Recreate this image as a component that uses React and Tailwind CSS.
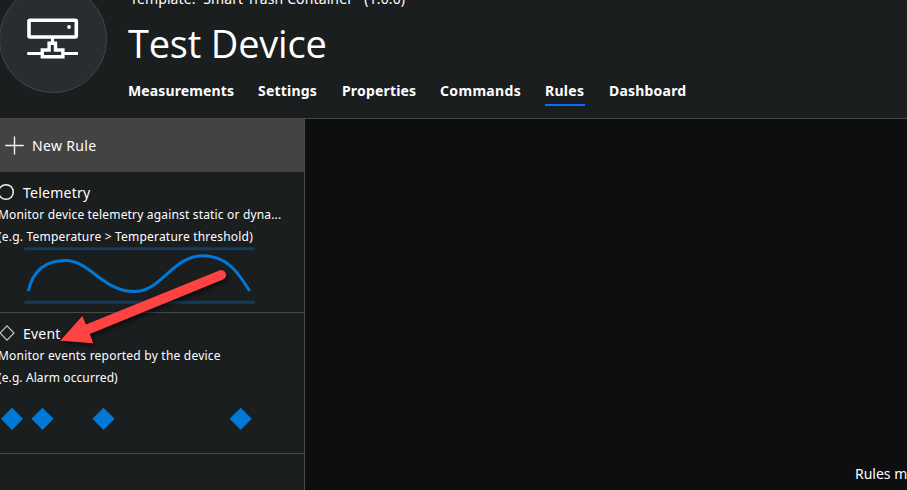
const TABS = [
  { label: 'Measurements', box: 'w-[106px]', tracking: 'tracking-[0.13px]' },
  { label: 'Settings', box: 'w-[60px]', tracking: 'tracking-[0.2px]' },
  { label: 'Properties', box: 'w-[74px]', tracking: 'tracking-[0.17px]' },
  { label: 'Commands', box: 'w-[81px]', tracking: 'tracking-[0.33px]' },
  { label: 'Rules', box: 'w-[40px]', tracking: 'tracking-[0.27px]', active: true },
  { label: 'Dashboard', box: 'w-[78px]', tracking: 'tracking-[0.2px]' },
];

function DeviceAvatar() {
  return (
    <svg className="-ml-px -mt-[15px] h-[108px] w-[108px] shrink-0" viewBox="-1 -15 108 108" fill="none">
      <circle cx="53" cy="39" r="53.6" fill="#2a2d30" stroke="#444648" strokeWidth="1" />
      <g stroke="#fff" strokeWidth="3.6">
        <rect x="29" y="20.2" width="47.3" height="16.8" rx="1" />
        <path d="M52.5 38v5M27.3 53.5H42M63 53.5h15" strokeWidth="3.2" />
        <path d="M42.3 56.8V50h6.8v-6.8h6.4V50h7.4v6.8z" strokeWidth="3.4" />
      </g>
      <circle cx="69" cy="27" r="1.9" fill="#fff" />
    </svg>
  );
}

function TelemetryChart() {
  return (
    <svg className="mt-[-2px] h-[60px] w-[304px]" viewBox="0 246 304 60" fill="none">
      <path d="M24.5 248.8h230M24.5 302.2h230" stroke="#133c5f" strokeWidth="3" />
      <path
        d="M28.3 291C34 266 51 260.6 65.5 260.6C90 260.6 103 291.5 134 291.5C162 291.5 172 255.8 203 255.8C228 255.8 239 274 249.6 291"
        stroke="#0078d7"
        strokeWidth="3"
      />
    </svg>
  );
}

function EventChart() {
  return (
    <svg className="mt-[17px] h-[26px] w-[304px]" viewBox="0 406 304 26" fill="#0078d7">
      {[12, 42.5, 103.5, 240.7].map((x) => (
        <path key={x} d={`M${x} 407.7l11.1 11.1l-11.1 11.1l-11.1 -11.1z`} />
      ))}
    </svg>
  );
}

export default function App() {
  return (
    <div className="relative flex h-[490px] w-[907px] flex-col overflow-hidden bg-[#1b1e1f] font-['Noto_Sans','Open_Sans',sans-serif] text-white">
      <header className="flex h-[119px] shrink-0 border-b border-[#48484a]">
        <DeviceAvatar />
        <div className="ml-[21px] flex flex-col whitespace-nowrap">
          <div className="-mt-[11px] ml-[2px] h-5 text-[14px] leading-5 tracking-[0.12px]">Template:&nbsp; Smart Trash Container &nbsp; (1.0.0)</div>
          <h1 className="mt-[9px] h-[50px] font-['Open_Sans'] text-[38px] leading-[50px] tracking-[-0.2px]">Test Device</h1>
          <nav className="mt-[12px] flex gap-6">
            {TABS.map((t) => (
              <div
                key={t.label}
                className={`h-[26px] shrink-0 border-b-2 text-[14px] leading-[22px] font-bold ${t.box} ${t.tracking} ${t.active ? 'border-[#0f6cff]' : 'border-transparent'}`}
              >
                {t.label}
              </div>
            ))}
          </nav>
        </div>
      </header>
      <div className="flex min-h-0 flex-1">
        <aside className="w-[305px] shrink-0 border-r border-[#48484a] whitespace-nowrap">
          <div className="flex h-[53px] items-center bg-[#434343] text-[14px]">
            <svg className="ml-[5px] h-[19px] w-[19px]" viewBox="0 0 19 19" stroke="#f2f2f2" strokeWidth="1.4">
              <path d="M9.5 .5v18M.3 9.5h18.4" />
            </svg>
            <span className="ml-2 tracking-[0.35px]">New Rule</span>
          </div>
          <section className="h-[141px] border-b border-[#48484a] pt-[10px]">
            <div className="mb-[2px] flex h-5 items-center text-[14px]">
              <svg className="-ml-[3px] h-[18px] w-[18px]" viewBox="0 0 18 18" fill="none" stroke="#f2f2f2" strokeWidth="1.5">
                <circle cx="9" cy="9" r="7.3" />
              </svg>
              <span className="ml-2 tracking-[0.25px]">Telemetry</span>
            </div>
            <p className="-ml-[2px] text-[12px] leading-[22px] tracking-[0.17px]">Monitor device telemetry against static or dyna...</p>
            <p className="-ml-[2px] text-[12px] leading-[22px] tracking-[0.2px]">(e.g. Temperature &gt; Temperature threshold)</p>
            <TelemetryChart />
          </section>
          <section className="h-[141px] border-b border-[#48484a] pt-[10px]">
            <div className="mb-[2px] flex h-5 items-center text-[14px]">
              <svg className="-ml-[2px] h-[18px] w-[18px]" viewBox="0 0 18 18" fill="none" stroke="#c9c9c9" strokeWidth="1.2">
                <path d="M9 1.8l7 7.2l-7 7.2l-7 -7.2z" />
              </svg>
              <span className="ml-[7px] tracking-[0.2px]">Event</span>
            </div>
            <p className="-ml-[2px] text-[12px] leading-[22px] tracking-[0.22px]">Monitor events reported by the device</p>
            <p className="-ml-[2px] text-[12px] leading-[22px] tracking-[0.1px]">(e.g. Alarm occurred)</p>
            <EventChart />
          </section>
        </aside>
        <main className="flex flex-1 items-end justify-end overflow-hidden bg-[#0d0e10]">
          <div className="mb-[6px] w-[52px] text-[14px] leading-5 whitespace-nowrap">Rules monitor</div>
        </main>
      </div>
      {/* Callout arrow laid over the rule list */}
      <svg className="pointer-events-none absolute top-[260px] left-[50px] h-[100px] w-[190px] drop-shadow-[2px_3px_2px_rgba(0,0,0,0.55)]" viewBox="50 260 190 100">
        <path d="M60.3 340.7L82.3 316L86 324.6L219.3 270.4A4.8 4.8 0 0 1 223 279.6L89.8 334L93.3 343.3z" fill="#ff4343" />
      </svg>
    </div>
  );
}
